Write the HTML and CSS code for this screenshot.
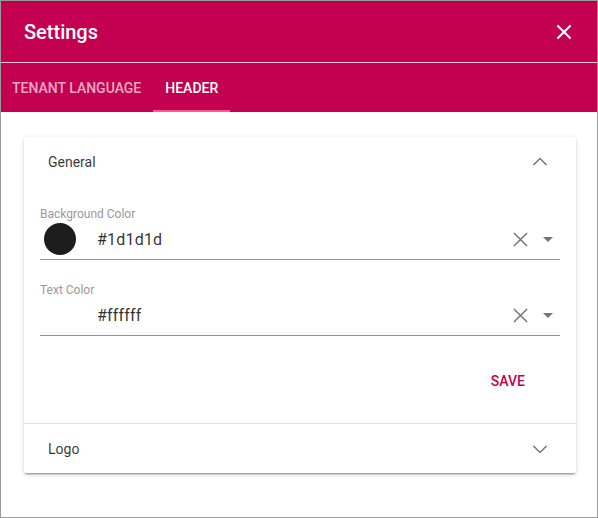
FILE: index.html
```html
<!DOCTYPE html>
<html>
<head>
<meta charset="utf-8">
<link rel="stylesheet" href="styles.css">
</head>
<body>
<div class="dialog">
  <div class="titlebar">
    <div class="title">Settings</div>
    <svg class="close" width="24" height="24" viewBox="0 0 24 24"><path fill="#fff" d="M19 6.41L17.59 5 12 10.59 6.41 5 5 6.41 10.59 12 5 17.59 6.41 19 12 13.41 17.59 19 19 17.59 13.41 12z"/></svg>
  </div>
  <div class="tabs">
    <div class="tab first">TENANT LANGUAGE</div>
    <div class="tab active">HEADER</div>
  </div>
  <div class="content">
    <div class="card">
      <div class="panel-head top">
        <span>General</span>
        <svg class="chev" width="24" height="24" viewBox="0 0 24 24"><polyline points="5.5,15 12,8.5 18.5,15" fill="none" stroke="#757575" stroke-width="1.5"/></svg>
      </div>
      <div class="panel-body">
        <div class="field first-field">
          <div class="label">Background Color</div>
          <div class="row">
            <span class="swatch dark"></span>
            <span class="value">#1d1d1d</span>
            <svg class="clear" width="16" height="16" viewBox="0 0 16 16"><path d="M1 1L15 15M15 1L1 15" stroke="#757575" stroke-width="1.6" fill="none"/></svg>
            <svg class="caret" width="10" height="5" viewBox="0 0 10 5"><path d="M0 0h10L5 5z" fill="#757575"/></svg>
          </div>
        </div>
        <div class="field">
          <div class="label">Text Color</div>
          <div class="row">
            <span class="swatch light"></span>
            <span class="value">#ffffff</span>
            <svg class="clear" width="16" height="16" viewBox="0 0 16 16"><path d="M1 1L15 15M15 1L1 15" stroke="#757575" stroke-width="1.6" fill="none"/></svg>
            <svg class="caret" width="10" height="5" viewBox="0 0 10 5"><path d="M0 0h10L5 5z" fill="#757575"/></svg>
          </div>
        </div>
        <div class="actions">
          <button class="save">SAVE</button>
        </div>
      </div>
      <div class="panel-head divider">
        <span>Logo</span>
        <svg class="chev" width="24" height="24" viewBox="0 0 24 24"><polyline points="5.5,9 12,15.5 18.5,9" fill="none" stroke="#757575" stroke-width="1.5"/></svg>
      </div>
    </div>
  </div>
</div>
</body>
</html>
```
FILE: styles.css
```css
* { box-sizing: border-box; }
html, body { margin: 0; padding: 0; background: #fff; }
body { font-family: Roboto, "Liberation Sans", Arial, sans-serif; }

.dialog {
  width: 598px;
  height: 518px;
  border: 1px solid #9a9a9a;
  background: #fff;
  display: flex;
  flex-direction: column;
}

.titlebar {
  height: 62px;
  background: #c40050;
  border-bottom: 1px solid #f3c4d6;
  display: flex;
  align-items: center;
  justify-content: space-between;
  padding: 0 21px 0 23px;
  box-shadow: inset 0 2px 2px -1px rgba(0,0,0,0.15);
  flex: none;
}
.title {
  color: #fff;
  font-size: 20px;
  font-weight: 500;
}
.close { display: block; width: 24px; height: 24px; transform: scale(1.05); }

.tabs {
  height: 49px;
  background: #c40050;
  display: flex;
  flex: none;
}
.tab {
  height: 49px;
  display: flex;
  align-items: center;
  padding: 2px 12px 0;
  font-size: 14px;
  font-weight: 500;
  color: rgba(255,255,255,0.68);
  border-bottom: 2px solid transparent;
}
.tab.first { padding-left: 11px; }
.tab.active { color: #fff; border-bottom-color: #ff5a8f; }

.content {
  padding: 25px 21px 0 23px;
}
.card {
  background: #fff;
  border-radius: 2px;
  box-shadow: 0 3px 1px -2px rgba(0,0,0,.2), 0 2px 2px 0 rgba(0,0,0,.14), 0 1px 5px 0 rgba(0,0,0,.12);
}

.panel-head {
  height: 48px;
  display: flex;
  align-items: center;
  justify-content: space-between;
  padding: 0 24px;
  font-size: 14px;
  color: rgba(0,0,0,0.8);
}
.panel-head.top { padding-top: 2px; }
.panel-head.divider {
  height: 50px;
  border-top: 1px solid #e0e0e0;
  padding-top: 1px;
}
.chev { display: block; }

.panel-body {
  padding: 0 16px 24px;
}
.field { margin-top: 22px; }
.field.first-field { margin-top: 21px; }
.label {
  font-size: 12px;
  line-height: 16px;
  color: #9a9a9a;
}
.row {
  height: 38px;
  border-bottom: 1px solid #949494;
  display: flex;
  align-items: center;
  padding: 0 0 3px 4px;
}
.swatch {
  width: 32px;
  height: 32px;
  border-radius: 50%;
  flex: none;
}
.swatch.dark { background: #1d1d1d; }
.swatch.light { background: #fff; }
.value {
  margin-left: 21px;
  font-size: 16px;
  color: rgba(0,0,0,0.82);
  flex: 1;
  letter-spacing: 0.2px;
}
.clear { display: block; margin-right: 15px; width: 15px; height: 15px; }
.caret { display: block; margin-right: 7px; }

.actions {
  display: flex;
  justify-content: flex-end;
  margin-top: 27px;
  padding-right: 19px;
}
.save {
  height: 36px;
  min-width: 64px;
  padding: 0 16px;
  border: none;
  background: transparent;
  font-family: Roboto, "Liberation Sans", Arial, sans-serif;
  font-size: 14px;
  font-weight: 500;
  color: #c5004f;
}
```
